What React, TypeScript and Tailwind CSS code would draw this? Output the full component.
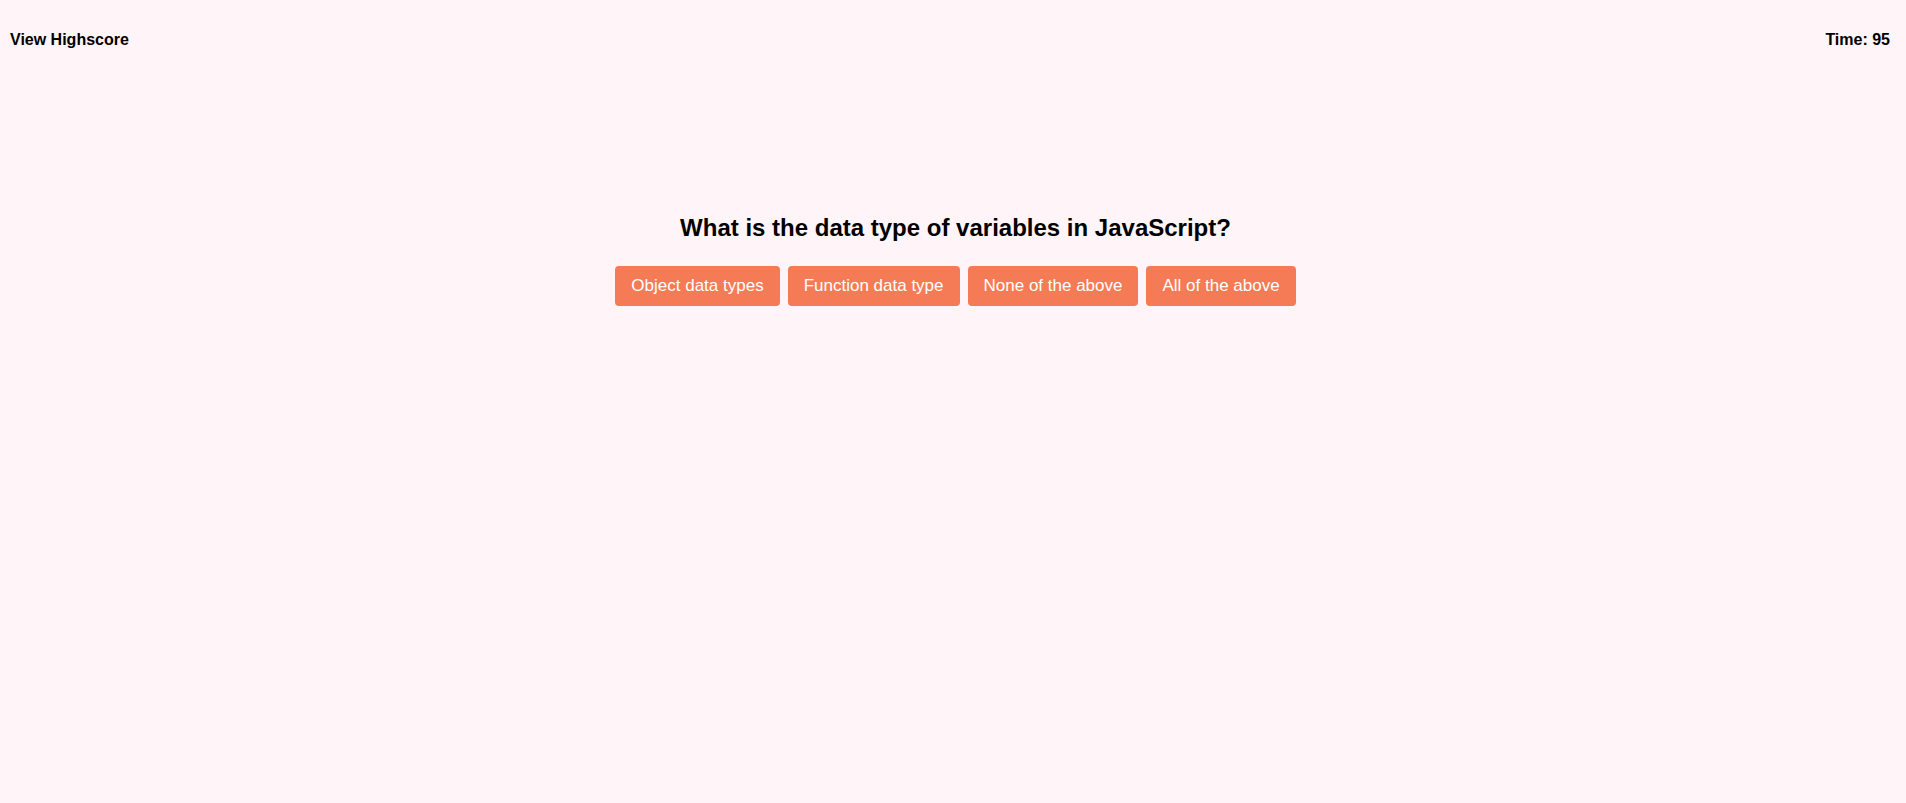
const choices = [
  "Object data types",
  "Function data type",
  "None of the above",
  "All of the above",
];

function App() {
  return (
    <div className="min-h-screen bg-[#fff4f7] text-black font-['Liberation_Sans',Arial,sans-serif]">
      <header className="flex items-start justify-between pl-[10px] pr-[16px] pt-[30px]">
        <a className="cursor-pointer text-[16px] leading-[20px] font-bold">View Highscore</a>
        <span className="text-[16px] leading-[20px] font-bold">Time: 95</span>
      </header>

      <main className="mt-[164px] flex flex-col items-center pl-[5px]">
        <h2 className="text-[24px] leading-[28px] font-bold">
          What is the data type of variables in JavaScript?
        </h2>
        <div className="mt-[24px] flex gap-[8px]">
          {choices.map((c) => (
            <button
              key={c}
              type="button"
              className="h-[40px] rounded-[4px] bg-[#f47b55] px-[16px] text-[17px] text-white"
            >
              {c}
            </button>
          ))}
        </div>
      </main>
    </div>
  );
}

export default App;
